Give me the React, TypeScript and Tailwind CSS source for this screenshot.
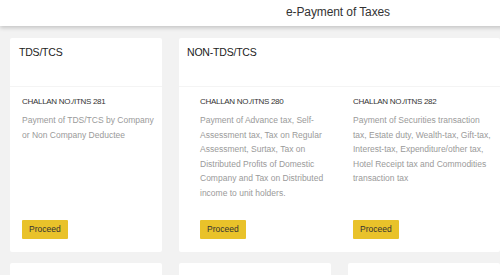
export default function App() {
  return (
    <div className="w-[500px] h-[275px] overflow-hidden bg-[#f2f2f2]">
      <div className="w-[676px] font-['Liberation_Sans',Arial,sans-serif]">
        {/* Header */}
        <div className="h-[26px] bg-white shadow-[0_2px_4px_rgba(0,0,0,0.18)] flex items-center justify-center relative z-10">
          <h1 className="text-[12px] tracking-[-0.1px] leading-[16px] text-[#333] mt-[-2px]">e-Payment of Taxes</h1>
        </div>

        {/* Cards */}
        <div className="grid grid-cols-[152px_152px_152px_152px] gap-x-[17px] gap-y-[11px] px-[10px] pt-[12px]">
          {/* TDS/TCS */}
          <div className="bg-white rounded-[2px] flex flex-col">
            <div className="h-[49px] px-[9px] pt-[7px] border-b border-[#f4f4f4]">
              <h2 className="text-[10.5px] tracking-[-0.2px] leading-[14px] text-[#222]">TDS/TCS</h2>
            </div>
            <div className="flex flex-col flex-1 pl-[12px] pr-[6px] pt-[8px] pb-[13px]">
              <Challan no="281" desc="Payment of TDS/TCS by Company or Non Company Deductee" />
            </div>
          </div>

          {/* NON-TDS/TCS */}
          <div className="col-span-2 bg-white rounded-[2px] flex flex-col">
            <div className="h-[49px] px-[8px] pt-[7px] border-b border-[#f4f4f4]">
              <h2 className="text-[10.5px] tracking-[-0.2px] leading-[14px] text-[#222]">NON-TDS/TCS</h2>
            </div>
            <div className="grid grid-cols-[138px_139px] gap-x-[15px] pl-[21px] pt-[8px] pb-[13px]">
              <div className="flex flex-col">
                <Challan
                  no="280"
                  desc="Payment of Advance tax, Self-Assessment tax, Tax on Regular Assessment, Surtax, Tax on Distributed Profits of Domestic Company and Tax on Distributed income to unit holders."
                />
              </div>
              <div className="flex flex-col">
                <Challan
                  no="282"
                  desc="Payment of Securities transaction tax, Estate duty, Wealth-tax, Gift-tax, Interest-tax, Expenditure/other tax, Hotel Receipt tax and Commodities transaction tax"
                />
              </div>
            </div>
          </div>

          <div className="bg-white rounded-[2px] h-[200px]" />

          {/* next row */}
          <div className="bg-white rounded-[2px] h-[200px]" />
          <div className="bg-white rounded-[2px] h-[200px]" />
          <div className="bg-white rounded-[2px] h-[200px]" />
          <div className="bg-white rounded-[2px] h-[200px]" />
        </div>
      </div>
    </div>
  );
}

function Challan({ no, desc }: { no: string; desc: string }) {
  return (
    <>
      <p className="text-[8px] tracking-[-0.3px] leading-[14px] text-[#333] uppercase">CHALLAN NO./ITNS {no}</p>
      <p className="mt-[4px] text-[8.5px] leading-[14.5px] text-[#9a9a9a]">{desc}</p>
      <div className="mt-auto pt-[15px]">
        <button className="h-[19px] px-[7px] bg-[#e9c22a] text-[8.5px] text-[#333] rounded-[1px]">Proceed</button>
      </div>
    </>
  );
}
